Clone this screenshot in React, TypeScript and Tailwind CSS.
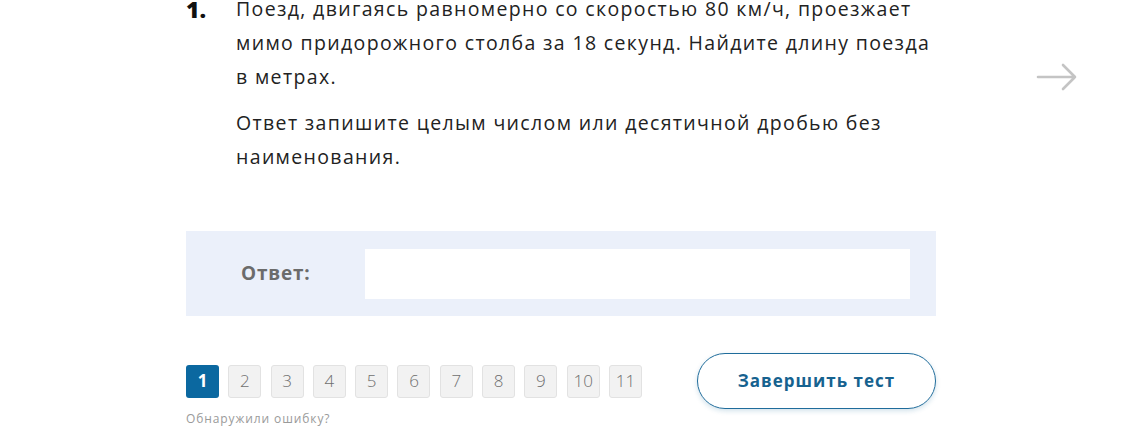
import React, { useState } from 'react';

const pages = [1, 2, 3, 4, 5, 6, 7, 8, 9, 10, 11];

const App: React.FC = () => {
  const [current, setCurrent] = useState(1);
  const [answer, setAnswer] = useState('');

  return (
    <div className="w-[1122px] h-[429px] overflow-hidden bg-white font-['Open_Sans',sans-serif] text-[#222]">
      <div className="flex -mt-[8px]">
        <div className="ml-[186px] w-[750px]">
          {/* Question */}
          <div className="flex">
            <div className="w-[50px] shrink-0 text-[23px] font-extrabold leading-[34px] text-[#111]">1.</div>
            <div className="w-[700px] text-[19.5px] leading-[34px] tracking-[1.35px]">
              <p>
                Поезд, двигаясь равномерно со скоростью 80 км/ч, проезжает мимо придорожного столба за 18 секунд. Найдите длину поезда в метрах.
              </p>
              <p className="mt-[12px]">Ответ запишите целым числом или десятичной дробью без наименования.</p>
            </div>
          </div>

          {/* Answer */}
          <div className="mt-[57px] h-[85px] bg-[#ebf0fa] flex items-center pl-[55px] pr-[26px]">
            <span className="w-[124px] text-[19px] font-bold tracking-[0.8px] text-[#6b6b6b]">Ответ:</span>
            <input
              value={answer}
              onChange={(e) => setAnswer(e.target.value)}
              className="flex-1 h-[50px] bg-white outline-none px-4 text-[18px]"
            />
          </div>

          {/* Pagination */}
          <div className="mt-[37px] flex items-center justify-between">
            <div className="flex gap-[9.3px]">
              {pages.map((p) => (
                <button
                  key={p}
                  onClick={() => setCurrent(p)}
                  className={`w-[33px] h-[33px] rounded-[3px] flex items-center justify-center text-[17px] ${
                    current === p
                      ? 'bg-[#0b68a0] text-white font-bold'
                      : 'bg-[#f2f2f2] border border-[#e2e2e2] text-[#6f6f6f] font-light'
                  }`}
                >
                  {p}
                </button>
              ))}
            </div>
            <button className="w-[239px] h-[56px] rounded-full border-[1.5px] border-[#1f6c9b] text-[#16628f] text-[17px] font-bold tracking-[1px] shadow-[0_2px_5px_rgba(31,108,155,0.2)]">
              Завершить тест
            </button>
          </div>
          <div className="mt-[1px] text-[12px] tracking-[0.9px] text-[#9a9a9a]">Обнаружили ошибку?</div>
        </div>

        {/* Next arrow */}
        <div className="ml-[100px] mt-[71px]">
          <svg width="42" height="28" viewBox="0 0 42 28" fill="none" stroke="#c4c4c4" strokeWidth="2.6" strokeLinecap="round" strokeLinejoin="round">
            <path d="M2 14h37M27 2l12 12-12 12" />
          </svg>
        </div>
      </div>
    </div>
  );
};

export default App;
